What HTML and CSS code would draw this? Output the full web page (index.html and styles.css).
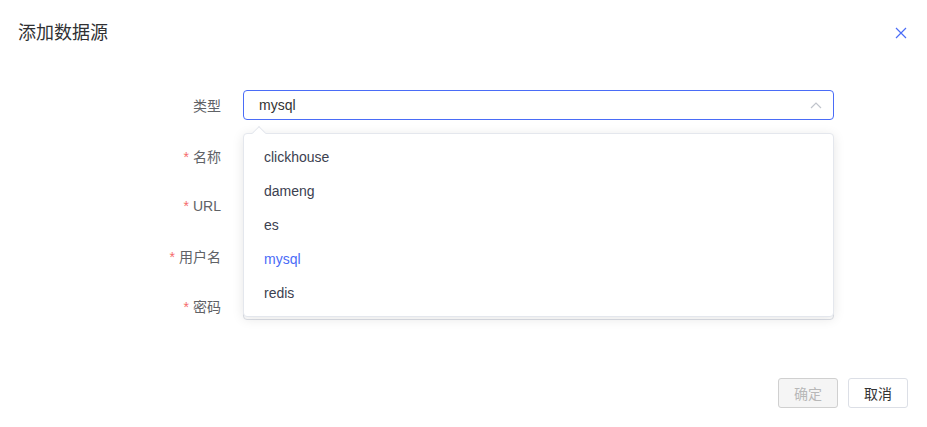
FILE: index.html
```html
<!DOCTYPE html>
<html lang="zh-CN">
<head>
    <meta charset="UTF-8">
    <meta name="viewport" content="width=device-width, initial-scale=1.0">
    <title>添加数据源</title>
    <link rel="stylesheet" href="styles.css">
</head>
<body>
    <div class="dialog">
        <div class="dialog-header">
            <span class="dialog-title">添加数据源</span>
            <button class="dialog-close" aria-label="关闭">
                <svg width="12" height="12" viewBox="0 0 12 12">
                    <path d="M1 1 L11 11 M11 1 L1 11" stroke="#4a6cf7" stroke-width="1.2" fill="none"/>
                </svg>
            </button>
        </div>
        <div class="dialog-body">
            <div class="form-item">
                <label class="form-label">类型</label>
                <div class="form-field">
                    <div class="select is-open">
                        <span class="select-value">mysql</span>
                        <svg class="select-arrow" width="12" height="8" viewBox="0 0 12 8">
                            <path d="M1 7 L6 2 L11 7" stroke="#c0c4cc" stroke-width="1.2" fill="none"/>
                        </svg>
                    </div>
                    <div class="dropdown">
                        <span class="dropdown-arrow"></span>
                        <ul class="dropdown-list">
                            <li>clickhouse</li>
                            <li>dameng</li>
                            <li>es</li>
                            <li class="selected">mysql</li>
                            <li>redis</li>
                        </ul>
                    </div>
                </div>
            </div>
            <div class="form-item">
                <label class="form-label"><em>*</em>名称</label>
                <div class="form-field"><input class="input" type="text"></div>
            </div>
            <div class="form-item">
                <label class="form-label"><em>*</em>URL</label>
                <div class="form-field"><input class="input" type="text"></div>
            </div>
            <div class="form-item">
                <label class="form-label"><em>*</em>用户名</label>
                <div class="form-field"><input class="input" type="text"></div>
            </div>
            <div class="form-item">
                <label class="form-label"><em>*</em>密码</label>
                <div class="form-field"><input class="input" type="password"></div>
            </div>
        </div>
        <div class="dialog-footer">
            <button class="btn" disabled>确定</button>
            <button class="btn">取消</button>
        </div>
    </div>
</body>
</html>
```

FILE: styles.css
```css
* {
    box-sizing: border-box;
}
body {
    margin: 0;
    background-color: white;
    font-family: "Liberation Sans", "Noto Sans CJK SC", sans-serif;
    color: #333;
}
.dialog {
    width: 927px;
    height: 427px;
    position: relative;
}
.dialog-header {
    display: flex;
    justify-content: space-between;
    align-items: center;
    padding: 20px 20px 0 18px;
    height: 46px;
}
.dialog-title {
    font-size: 18px;
    line-height: 26px;
    color: #303133;
}
.dialog-close {
    border: none;
    background: none;
    padding: 0;
    width: 12px;
    height: 12px;
    cursor: pointer;
    display: flex;
}
.dialog-body {
    padding: 44px 93px 0 0;
}
.form-item {
    display: flex;
    align-items: center;
    margin-bottom: 20px;
}
.form-label {
    width: 221px;
    margin-right: 22px;
    padding-top: 2px;
    text-align: right;
    font-size: 14px;
    color: #606266;
}
.form-item:first-child .form-label {
    padding-top: 0;
}
.form-label em {
    font-style: normal;
    color: #f56c6c;
    margin-right: 4px;
}
.form-field {
    flex: 1;
    position: relative;
}
.input, .select {
    width: 100%;
    height: 30px;
    border: 1px solid #dcdfe6;
    border-radius: 4px;
    background-color: white;
    font-size: 14px;
    padding: 0 15px;
    outline: none;
}
.select {
    display: flex;
    align-items: center;
    justify-content: space-between;
}
.select.is-open {
    border-color: #4a6cf7;
}
.select-value {
    color: #333;
}
.select-arrow {
    margin-right: -4px;
}
.dropdown {
    position: absolute;
    top: 43px;
    left: 0;
    right: 0;
    z-index: 10;
    background-color: white;
    border: 1px solid #e4e7ed;
    border-radius: 4px;
    box-shadow: 0 2px 12px rgba(0, 0, 0, 0.1);
}
.dropdown-arrow {
    position: absolute;
    top: -6px;
    left: 10px;
    width: 10px;
    height: 10px;
    background-color: white;
    border-left: 1px solid #e4e7ed;
    border-top: 1px solid #e4e7ed;
    transform: rotate(45deg);
}
.dropdown-list {
    list-style: none;
    margin: 0;
    padding: 6px 0;
    position: relative;
}
.dropdown-list li {
    height: 34px;
    line-height: 34px;
    padding: 0 20px;
    font-size: 14px;
    color: #3c4150;
}
.dropdown-list li.selected {
    color: #4a6cf7;
}
.dialog-footer {
    position: absolute;
    right: 19px;
    bottom: 19px;
    display: flex;
    gap: 10px;
}
.btn {
    height: 30px;
    padding: 0 15px;
    font-size: 14px;
    font-family: inherit;
    border: 1px solid #dcdfe6;
    border-radius: 3px;
    background-color: white;
    color: #333;
    cursor: pointer;
}
.btn:disabled {
    background-color: #f5f5f5;
    border-color: #d0d0d0;
    color: #b8b8b8;
    cursor: not-allowed;
}
```
